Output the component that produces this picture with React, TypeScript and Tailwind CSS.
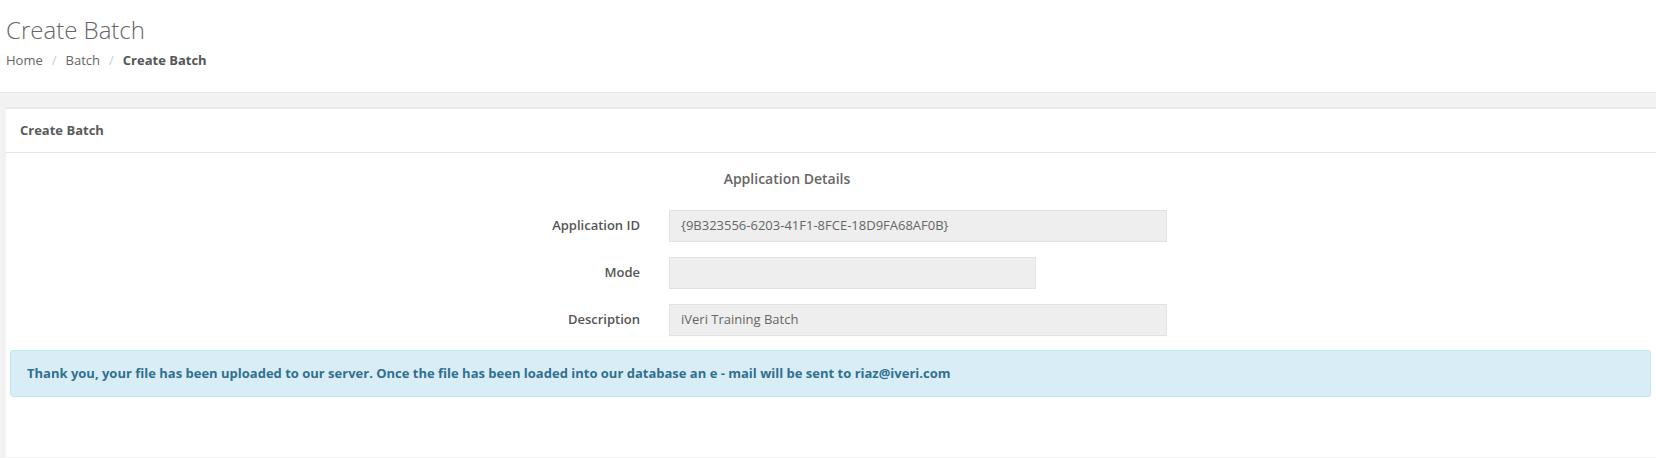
import React from 'react';

const rows = [
  { label: 'Application ID', value: '{9B323556-6203-41F1-8FCE-18D9FA68AF0B}', width: 'w-[498px]' },
  { label: 'Mode', value: '', width: 'w-[367px]' },
  { label: 'Description', value: 'iVeri Training Batch', width: 'w-[498px]' },
];

const App: React.FC = () => {
  return (
    <div className="min-h-[458px] bg-[#f2f2f2] text-[13px] text-[#555]" style={{ fontFamily: '"Open Sans", "Liberation Sans", sans-serif' }}>
      {/* Page header */}
      <div className="h-[93px] bg-white border-b border-[#e5e5e5] px-[6px] pt-[13px]">
        <h1 className="text-[24px] font-light leading-[33px] text-[#666]">Create Batch</h1>
        <div className="mt-[5px] flex items-center text-[13px] leading-[18px]">
          <span className="text-[#666]">Home</span>
          <span className="px-[9px] text-[#ccc]">/</span>
          <span className="text-[#666]">Batch</span>
          <span className="px-[9px] text-[#ccc]">/</span>
          <span className="font-bold text-[#555]">Create Batch</span>
        </div>
      </div>

      <div className="pt-[14px] pl-[6px]">
        <div className="bg-white border-t-2 border-[#e6e9ed] min-h-[350px]">
          {/* Card header */}
          <div className="h-[44px] border-b border-[#e5e5e5] px-[14px] flex items-center">
            <h2 className="font-bold text-[13px] text-[#5a5a5a]">Create Batch</h2>
          </div>

          <div className="pt-[16px]">
            <div className="w-[1562px] text-center text-[14px] font-semibold text-[#666] leading-[20px]">Application Details</div>

            <div className="mt-[21px] flex flex-col gap-[15px]">
              {rows.map((row) => (
                <div key={row.label} className="flex items-center">
                  <label className="w-[634px] text-right font-semibold text-[#555]">{row.label}</label>
                  <div className={`ml-[29px] h-[32px] ${row.width} bg-[#eeeeee] border border-[#e2e2e2] px-[11px] flex items-center text-[#666]`}>
                    {row.value}
                  </div>
                </div>
              ))}
            </div>

            <div className="mt-[14px] ml-[4px] mr-[5px] h-[47px] rounded-[3px] border border-[#bce8f1] bg-[#d9edf7] px-[16px] flex items-center">
              <p className="font-bold text-[#31708f]">
                Thank you, your file has been uploaded to our server. Once the file has been loaded into our database an e - mail will be sent to riaz@iveri.com
              </p>
            </div>
          </div>
        </div>
      </div>
    </div>
  );
};

export default App;
